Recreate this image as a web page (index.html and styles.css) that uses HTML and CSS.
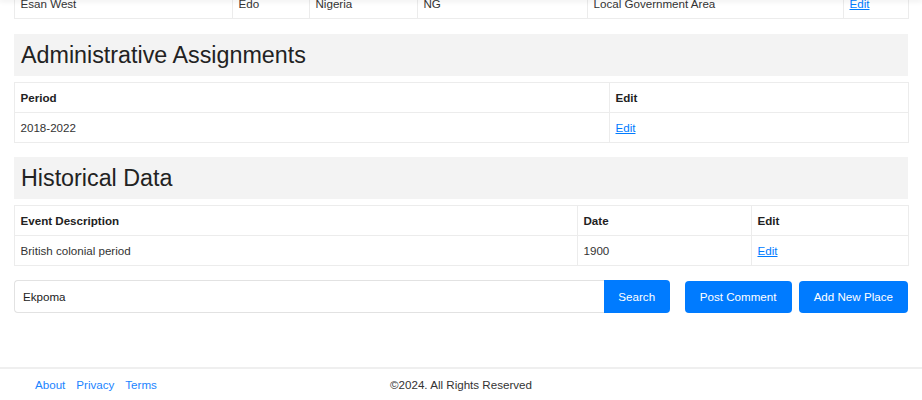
FILE: index.html
```html
<!DOCTYPE html>
<html lang="en">
<head>
<meta charset="utf-8">
<title>Place Details</title>
<link rel="stylesheet" href="styles.css">
</head>
<body>
<div class="topshade"></div>
<main class="main">
  <table class="data first">
    <colgroup>
      <col class="c1a"><col class="c1b"><col class="c1c"><col class="c1d"><col class="c1e"><col class="c1f">
    </colgroup>
    <tbody>
      <tr><td>Esan West</td><td>Edo</td><td>Nigeria</td><td>NG</td><td>Local Government Area</td><td><a href="#">Edit</a></td></tr>
    </tbody>
  </table>

  <h2 class="section-title">Administrative Assignments</h2>
  <table class="data">
    <colgroup><col class="c2a"><col class="c2b"></colgroup>
    <thead><tr><th>Period</th><th>Edit</th></tr></thead>
    <tbody><tr><td>2018-2022</td><td><a href="#">Edit</a></td></tr></tbody>
  </table>

  <h2 class="section-title">Historical Data</h2>
  <table class="data">
    <colgroup><col class="c3a"><col class="c3b"><col class="c3c"></colgroup>
    <thead><tr><th>Event Description</th><th>Date</th><th>Edit</th></tr></thead>
    <tbody><tr><td>British colonial period</td><td>1900</td><td><a href="#">Edit</a></td></tr></tbody>
  </table>

  <div class="actions">
    <form class="search">
      <input class="search-input" type="text" value="Ekpoma">
      <button class="btn btn-search" type="button">Search</button>
    </form>
    <div class="buttons">
      <button class="btn" type="button">Post Comment</button>
      <button class="btn" type="button">Add New Place</button>
    </div>
  </div>
</main>
<footer class="footer">
  <nav class="footer-links">
    <a href="#">About</a>
    <a href="#">Privacy</a>
    <a href="#">Terms</a>
  </nav>
  <div class="copyright">©2024. All Rights Reserved</div>
  <div></div>
</footer>
</body>
</html>
```

FILE: styles.css
```css
* { box-sizing: border-box; }

html, body {
  margin: 0;
  padding: 0;
  background: #fff;
  overflow: hidden;
}

body {
  font-family: "Liberation Sans", Arial, sans-serif;
  font-size: 11.6px;
  color: #333;
}

.topshade {
  position: fixed;
  top: 0;
  left: 0;
  right: 0;
  height: 0;
  box-shadow: 0 0 5px 1px rgba(0, 0, 0, 0.12);
  z-index: 10;
}

.main {
  padding: 0 14px;
  margin-top: -12px;
}

.data {
  width: 100%;
  border-collapse: collapse;
  table-layout: fixed;
  margin-bottom: 14px;
}

.data.first { margin-bottom: 15px; }

.data th,
.data td {
  border: 1px solid #ececec;
  padding: 6px 6px 6px 5.5px;
  line-height: 17px;
  text-align: left;
  white-space: nowrap;
  overflow: hidden;
}

.data th {
  font-weight: bold;
  color: #222;
}

.data td { color: #333; }

.data a {
  color: #007bff;
  text-decoration: underline;
}

.c1a { width: 218px; }
.c1b { width: 77px; }
.c1c { width: 108px; }
.c1d { width: 170px; }
.c1e { width: 256px; }
.c1f { width: 65px; }

.c2a { width: 595px; }
.c2b { width: 299px; }

.c3a { width: 563px; }
.c3b { width: 174px; }
.c3c { width: 157px; }

.section-title {
  margin: 0 0 6px;
  height: 42px;
  line-height: 42px;
  padding: 0 7px;
  background: #f3f3f3;
  font-size: 23.3px;
  font-weight: normal;
  color: #222;
}

.actions {
  display: flex;
  align-items: center;
}

.search {
  display: flex;
  flex: 1;
  margin: 0 15px 0 0;
}

.search-input {
  flex: 1;
  height: 33px;
  border: 1px solid #e2e2e2;
  border-right: none;
  border-radius: 4px 0 0 4px;
  padding: 0 8px;
  font-family: inherit;
  font-size: 11.6px;
  color: #222;
  outline: none;
}

.btn {
  height: 32px;
  padding: 0 15.1px;
  border: none;
  border-radius: 4px;
  background: #007bff;
  color: #fff;
  font-family: inherit;
  font-size: 11.6px;
  cursor: pointer;
}

.btn-search {
  height: 33px;
  padding: 0 14.6px;
  border-radius: 0 4px 4px 0;
}

.buttons {
  display: flex;
  gap: 7px;
}

.footer {
  margin-top: 54px;
  border-top: 2px solid #efefef;
  padding: 7px 35px;
  display: grid;
  grid-template-columns: 1fr auto 1fr;
  align-items: center;
  line-height: 17px;
}

.footer-links {
  display: flex;
  gap: 11px;
}

.footer-links a {
  color: #1a84ff;
  text-decoration: none;
}

.copyright { color: #333; }
```
